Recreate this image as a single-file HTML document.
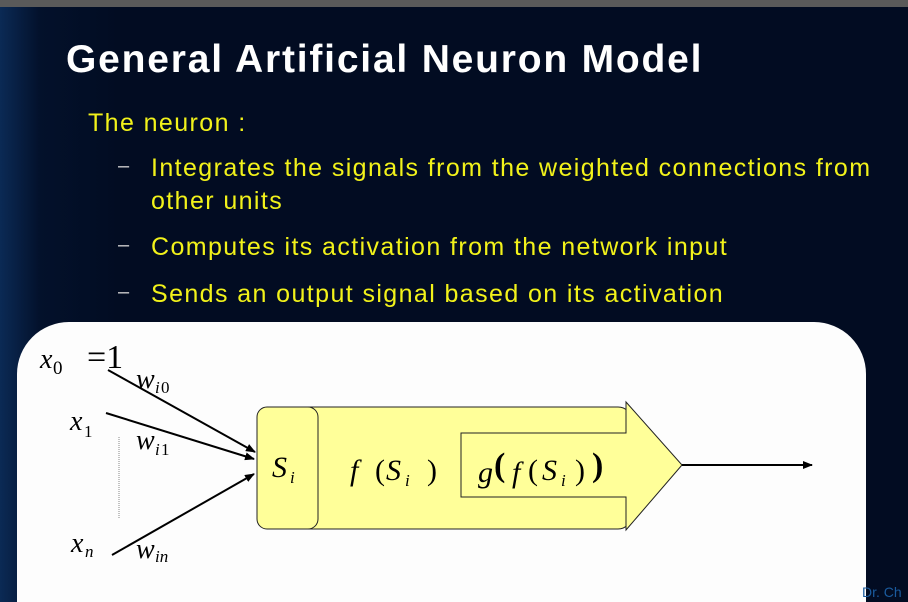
<!DOCTYPE html>
<html><head><style>
html,body{margin:0;width:908px;height:602px;overflow:hidden}
body{background:#020c22;position:relative;font-family:"Liberation Sans",sans-serif}
.bg{position:absolute;left:0;top:0;width:908px;height:602px;background:linear-gradient(90deg,#0b2a55 0,#03112b 40px,#020c22 120px,#020c22 100%)}
.top{position:absolute;left:0;top:0;width:908px;height:7px;background:#5a5a5a}
h1{position:absolute;left:66px;top:38px;margin:0;color:#fff;font-size:39px;font-weight:bold;letter-spacing:1.8px;white-space:nowrap}
.y{position:absolute;color:#f2f21a;font-size:25px;white-space:nowrap;letter-spacing:1.4px}
.d{position:absolute;color:#ccc;font-size:20px}
</style></head><body>
<div class="bg"></div><div class="top"></div>
<h1>General Artificial Neuron Model</h1>
<div class="y" style="left:88px;top:109px">The neuron :</div>
<div class="d" style="left:118px;top:155px">–</div>
<div class="y" style="left:151px;top:154px">Integrates the signals from the weighted connections from</div>
<div class="y" style="left:151px;top:187px">other units</div>
<div class="d" style="left:118px;top:234px">–</div>
<div class="y" style="left:151px;top:233px">Computes its activation from the network input</div>
<div class="d" style="left:118px;top:281px">–</div>
<div class="y" style="left:151px;top:280px">Sends an output signal based on its activation</div>
<svg style="position:absolute;left:0;top:0;overflow:hidden" width="908" height="602">
<defs><marker id="a" markerWidth="10" markerHeight="8" refX="9" refY="4" orient="auto" markerUnits="userSpaceOnUse"><path d="M0,0 L10,4 L0,8 z" fill="#000"/></marker></defs>
<path d="M17,602 V374 A52,52 0 0 1 69,322 H814 A52,52 0 0 1 866,374 V602 Z" fill="#fdfdfd"/>
<rect x="257" y="407" width="375" height="122" rx="14" fill="#ffff99" stroke="#222"/>
<rect x="257" y="407" width="61" height="122" rx="10" fill="#ffff99" stroke="#222"/>
<path d="M461,433 H626 V402 L682,465 L626,530 V497 H461 Z" fill="#ffff99" stroke="#222"/>
<line x1="682" y1="465" x2="812" y2="465" stroke="#000" stroke-width="2" marker-end="url(#a)"/>
<line x1="108" y1="370" x2="255" y2="452" stroke="#000" stroke-width="2" marker-end="url(#a)"/>
<line x1="106" y1="413" x2="254" y2="459" stroke="#000" stroke-width="2" marker-end="url(#a)"/>
<line x1="112" y1="555" x2="254" y2="474" stroke="#000" stroke-width="2" marker-end="url(#a)"/>
<line x1="119" y1="437" x2="119" y2="518" stroke="#888" stroke-dasharray="1,1"/>
<g font-family="Liberation Serif,serif" font-style="italic" fill="#000">
<text x="40" y="368" font-size="28">x</text><text x="53" y="374" font-size="19" font-style="normal">0</text>
<text x="87" y="368" font-size="34" font-style="normal">=1</text>
<text x="136" y="388" font-size="28">w</text><text x="155" y="393" font-size="17">i</text><text x="161" y="393" font-size="17" font-style="normal">0</text>
<text x="70" y="430" font-size="28">x</text><text x="84" y="437" font-size="17" font-style="normal">1</text>
<text x="136" y="449" font-size="28">w</text><text x="155" y="455" font-size="17">i</text><text x="161" y="455" font-size="17" font-style="normal">1</text>
<text x="71" y="552" font-size="28">x</text><text x="85" y="557" font-size="17">n</text>
<text x="136" y="558" font-size="28">w</text><text x="155" y="562" font-size="17">in</text>
<text x="272" y="477" font-size="30">S</text><text x="290" y="483" font-size="17">i</text>
<text x="350" y="480" font-size="30">f</text><text x="375" y="480" font-size="30" font-style="normal">(</text><text x="386" y="480" font-size="30">S</text><text x="405" y="486" font-size="17">i</text><text x="427" y="480" font-size="30" font-style="normal">)</text>
<text x="478" y="482" font-size="30">g</text><text x="494" y="476" font-size="34" font-style="normal" font-weight="bold">(</text><text x="512" y="482" font-size="30">f</text><text x="528" y="480" font-size="30" font-style="normal">(</text><text x="542" y="480" font-size="30">S</text><text x="561" y="486" font-size="17">i</text><text x="575" y="480" font-size="30" font-style="normal">)</text><text x="592" y="476" font-size="34" font-style="normal" font-weight="bold">)</text>
</g>
<text x="862" y="597" font-size="14" fill="#1a5b9e">Dr. Ch</text>
</svg>
</body></html>
